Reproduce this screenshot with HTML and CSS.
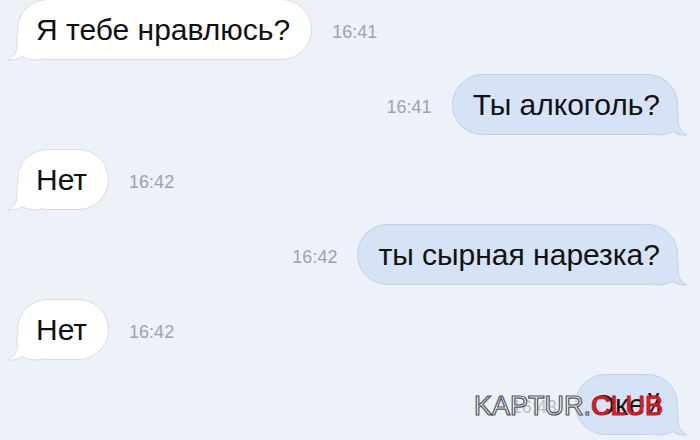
FILE: index.html
```html
<!DOCTYPE html>
<html lang="ru">
<head>
    <meta charset="UTF-8">
    <meta name="viewport" content="width=device-width, initial-scale=1.0">
    <title>Переписка</title>
    <link rel="stylesheet" href="styles.css">
</head>
<body>
    <div class="chat">
        <div class="row in">
            <div class="bubble"><span class="text">Я тебе нравлюсь?</span><svg class="tail" viewBox="0 0 34 26"><path class="tail-fill" d="M10 0 L10 11 C10 18 6 22 1 25 C7 25.5 12 24 15.5 21.5 C19 24 25 25 33 25 L33 0 Z"/><path class="tail-line" d="M10 0 L10 11 C10 18 6 22 1 25 C7 25.5 12 24 15.5 21.5 C19 24 25 25 33 25"/></svg></div>
            <span class="time">16:41</span>
        </div>
        <div class="row out">
            <span class="time">16:41</span>
            <div class="bubble"><span class="text">Ты алкоголь?</span><svg class="tail" viewBox="0 0 34 26"><path class="tail-fill" d="M10 0 L10 11 C10 18 6 22 1 25 C7 25.5 12 24 15.5 21.5 C19 24 25 25 33 25 L33 0 Z"/><path class="tail-line" d="M10 0 L10 11 C10 18 6 22 1 25 C7 25.5 12 24 15.5 21.5 C19 24 25 25 33 25"/></svg></div>
        </div>
        <div class="row in">
            <div class="bubble"><span class="text">Нет</span><svg class="tail" viewBox="0 0 34 26"><path class="tail-fill" d="M10 0 L10 11 C10 18 6 22 1 25 C7 25.5 12 24 15.5 21.5 C19 24 25 25 33 25 L33 0 Z"/><path class="tail-line" d="M10 0 L10 11 C10 18 6 22 1 25 C7 25.5 12 24 15.5 21.5 C19 24 25 25 33 25"/></svg></div>
            <span class="time">16:42</span>
        </div>
        <div class="row out">
            <span class="time">16:42</span>
            <div class="bubble"><span class="text">ты сырная нарезка?</span><svg class="tail" viewBox="0 0 34 26"><path class="tail-fill" d="M10 0 L10 11 C10 18 6 22 1 25 C7 25.5 12 24 15.5 21.5 C19 24 25 25 33 25 L33 0 Z"/><path class="tail-line" d="M10 0 L10 11 C10 18 6 22 1 25 C7 25.5 12 24 15.5 21.5 C19 24 25 25 33 25"/></svg></div>
        </div>
        <div class="row in">
            <div class="bubble"><span class="text">Нет</span><svg class="tail" viewBox="0 0 34 26"><path class="tail-fill" d="M10 0 L10 11 C10 18 6 22 1 25 C7 25.5 12 24 15.5 21.5 C19 24 25 25 33 25 L33 0 Z"/><path class="tail-line" d="M10 0 L10 11 C10 18 6 22 1 25 C7 25.5 12 24 15.5 21.5 C19 24 25 25 33 25"/></svg></div>
            <span class="time">16:42</span>
        </div>
        <div class="row out last">
            <span class="time">16:43</span>
            <div class="bubble"><span class="text">Окей</span><svg class="tail" viewBox="0 0 34 26"><path class="tail-fill" d="M10 0 L10 11 C10 18 6 22 1 25 C7 25.5 12 24 15.5 21.5 C19 24 25 25 33 25 L33 0 Z"/><path class="tail-line" d="M10 0 L10 11 C10 18 6 22 1 25 C7 25.5 12 24 15.5 21.5 C19 24 25 25 33 25"/></svg></div>
        </div>
    </div>

    <div class="watermark">KAPTUR.<span class="club">CLUB</span></div>
</body>
</html>
```

FILE: styles.css
```css
body {
    margin: 0;
    background: #edf1f8;
    font-family: 'Liberation Sans', Arial, sans-serif;
    overflow: hidden;
    height: 440px;
}
.chat {
    display: flex;
    flex-direction: column;
    gap: 14px;
    padding: 0 22px 0 17px;
    margin-top: -1px;
}
.row {
    display: flex;
    align-items: center;
    gap: 20px;
}
.row.out {
    justify-content: flex-end;
}
.bubble {
    position: relative;
    height: 61px;
    box-sizing: border-box;
    padding: 0 21px 0 18px;
    display: flex;
    align-items: center;
    font-size: 30px;
    color: #111;
    border-radius: 31px;
    background: #ffffff;
    border: 1px solid #d8dbe0;
}
.row.out .bubble {
    background: #d6e3f6;
    border-color: #c2cfe2;
    padding: 0 17px 0 20px;
}
.row.last .bubble {
    padding: 0 15px 0 16px;
}
.text {
    position: relative;
    z-index: 1;
}
.time {
    font-size: 18px;
    color: #9ea3ab;
    margin-top: 6px;
}
.row.last .time {
    color: #b9bec6;
    margin-right: -2px;
}
.tail {
    position: absolute;
    left: -11px;
    bottom: -2px;
    width: 34px;
    height: 26px;
    pointer-events: none;
}
.row.out .tail {
    left: auto;
    right: -11px;
    transform: scaleX(-1);
}
.tail-fill {
    fill: #ffffff;
}
.tail-line {
    fill: none;
    stroke: #d8dbe0;
    stroke-width: 1;
}
.row.out .tail-fill {
    fill: #d6e3f6;
}
.row.out .tail-line {
    stroke: #c2cfe2;
}
.watermark {
    position: absolute;
    left: 474px;
    top: 391px;
    font-size: 27px;
    color: #ffffff;
    -webkit-text-stroke: 1.2px #50555c;
    z-index: 2;
}
.watermark .club {
    color: #e3232b;
    -webkit-text-stroke: 1.2px #c01820;
}
```
